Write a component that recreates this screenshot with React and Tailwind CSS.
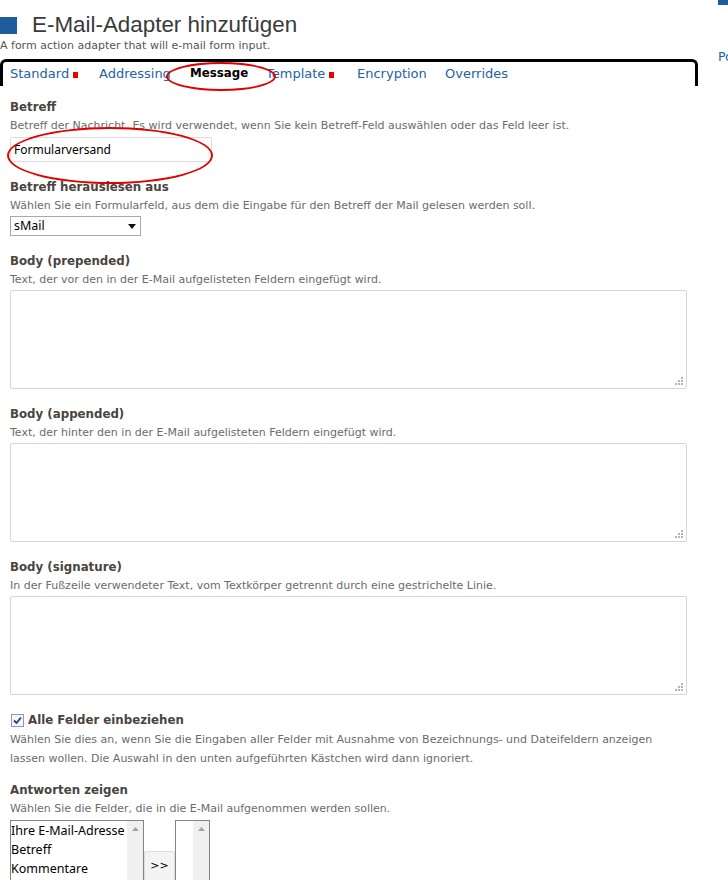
import React from "react";

function Grip() {
  return (
    <svg className="absolute right-[3px] bottom-[3px]" width="8" height="8" viewBox="0 0 8 8">
      {[
        [6, 0], [6, 3], [3, 3], [6, 6], [3, 6], [0, 6],
      ].map(([x, y], i) => (
        <rect key={i} x={x} y={y} width="2" height="2" fill="#b5b5b5" />
      ))}
    </svg>
  );
}

function Area() {
  return (
    <div className="relative w-[677px] h-[99px] border border-[#d6d6d6] rounded-[2px] bg-white mt-[3px]">
      <Grip />
    </div>
  );
}

function Label({ children, className = "" }) {
  return (
    <div className={"h-[15px] text-[11.8px] leading-[15px] font-bold text-[#4a4440] whitespace-nowrap " + className}>
      {children}
    </div>
  );
}

function Desc({ children, className = "" }) {
  return (
    <div className={"text-[11px] leading-[14px] text-[#6b6b6b] " + className}>{children}</div>
  );
}

function UpArrow() {
  return (
    <svg width="7" height="4" viewBox="0 0 7 4">
      <path d="M0 4 L3.5 0 L7 4 Z" fill="#a3a3a3" />
    </svg>
  );
}

function Marker() {
  return <span className="w-[5px] h-[6px] bg-[#ee0000] ml-[4px] mt-[2px]" />;
}

export default function App() {
  return (
    <div className="w-[728px] h-[880px] overflow-hidden bg-white relative font-['DejaVu_Sans',sans-serif]">
      <div className="flex">
        <div className="w-[698px] shrink-0">
          {/* Header */}
          <div className="flex items-center mt-[12px] h-[26px]">
            <div className="w-[17px] h-[17px] bg-[#1f5c9c]" />
            <div className="ml-[15px] text-[22.4px] leading-[26px] text-[#3a3a3a] font-['Liberation_Sans',sans-serif]">
              E-Mail-Adapter hinzufügen
            </div>
          </div>
          <div className="text-[11px] leading-[13px] text-[#555] mt-[1px] whitespace-nowrap">
            A form action adapter that will e-mail form input.
          </div>

          {/* Tabs */}
          <div className="relative mt-[7px] h-[27px] w-[698px] border-[3px] border-b-0 border-black rounded-t-[6px]">
            <div className="flex items-center h-[24px] pl-[7px] text-[13px] text-[#2462a8] whitespace-nowrap">
              <div className="w-[89px] flex items-center">
                <span>Standard</span>
                <Marker />
              </div>
              <div className="w-[91px]">Addressing</div>
              <div className="w-[76px] font-bold text-black text-[11.8px]">Message</div>
              <div className="w-[91px] flex items-center">
                <span>Template</span>
                <Marker />
              </div>
              <div className="w-[88px]">Encryption</div>
              <div>Overrides</div>
            </div>
          </div>

          {/* Content */}
          <div className="pl-[10px] pt-[14px]">
            <Label>Betreff</Label>
            <Desc className="mt-[4px]">Betreff der Nachricht. Es wird verwendet, wenn Sie kein Betreff-Feld auswählen oder das Feld leer ist.</Desc>
            <div className="mt-[4px] w-[202px] h-[25px] border border-[#dcdcdc] rounded-[2px] flex items-center pl-[3px] text-[12px] text-black font-['Noto_Sans',sans-serif]">
              Formularversand
            </div>

            <Label className="mt-[18px]">Betreff herauslesen aus</Label>
            <Desc className="mt-[4px]">Wählen Sie ein Formularfeld, aus dem die Eingabe für den Betreff der Mail gelesen werden soll.</Desc>
            <div className="mt-[3px] w-[131px] h-[20px] border border-[#a9a9a9] flex items-center justify-between pl-[3px] pr-[4px] text-[12.5px] text-black font-['Noto_Sans',sans-serif]">
              <span>sMail</span>
              <svg width="8" height="5" viewBox="0 0 8 5"><path d="M0 0 L8 0 L4 5 Z" fill="#111" /></svg>
            </div>

            <Label className="mt-[18px]">Body (prepended)</Label>
            <Desc className="mt-[4px]">Text, der vor den in der E-Mail aufgelisteten Feldern eingefügt wird.</Desc>
            <Area />

            <Label className="mt-[18px]">Body (appended)</Label>
            <Desc className="mt-[4px]">Text, der hinter den in der E-Mail aufgelisteten Feldern eingefügt wird.</Desc>
            <Area />

            <Label className="mt-[18px]">Body (signature)</Label>
            <Desc className="mt-[4px]">In der Fußzeile verwendeter Text, vom Textkörper getrennt durch eine gestrichelte Linie.</Desc>
            <Area />

            <div className="mt-[18px] h-[15px] flex items-center">
              <svg width="13" height="13" viewBox="0 0 13 13" className="ml-[1px]">
                <rect x="0.5" y="0.5" width="12" height="12" fill="#f4f6fb" stroke="#8a9ab8" />
                <path d="M3 6.5 L5.5 9 L10 3.5" fill="none" stroke="#253f80" strokeWidth="1.8" />
              </svg>
              <Label className="ml-[4px]">Alle Felder einbeziehen</Label>
            </div>
            <Desc className="leading-[19px] mt-[2px] w-[668px]">
              Wählen Sie dies an, wenn Sie die Eingaben aller Felder mit Ausnahme von Bezeichnungs- und Dateifeldern anzeigen lassen wollen. Die Auswahl in den unten aufgeführten Kästchen wird dann ignoriert.
            </Desc>

            <Label className="mt-[15px]">Antworten zeigen</Label>
            <Desc className="mt-[4px]">Wählen Sie die Felder, die in die E-Mail aufgenommen werden sollen.</Desc>
            <div className="mt-[4px] flex items-start">
              <div className="w-[134px] h-[70px] border border-[#848484] flex">
                <div className="flex-1 text-[12.5px] leading-[19px] text-black font-['Noto_Sans',sans-serif] whitespace-nowrap overflow-hidden">
                  <div>Ihre E-Mail-Adresse</div>
                  <div>Betreff</div>
                  <div>Kommentare</div>
                </div>
                <div className="w-[16px] bg-[#f0f0f0] flex justify-center pt-[6px]">
                  <UpArrow />
                </div>
              </div>
              <div className="mt-[31px] w-[31px] h-[30px] border border-[#dcdcdc] bg-[#f4f4f4] rounded-[2px] text-[11px] text-black flex items-center justify-center">
                &gt;&gt;
              </div>
              <div className="w-[35px] h-[70px] border border-[#848484] flex">
                <div className="flex-1" />
                <div className="w-[16px] bg-[#f0f0f0] flex justify-center pt-[6px]">
                  <UpArrow />
                </div>
              </div>
            </div>
          </div>
        </div>

        {/* Right column (cut off) */}
        <div className="ml-[20px] shrink-0 w-[10px] overflow-hidden">
          <div className="w-[12px] h-[5px] bg-[#1f5c9c]" />
          <div className="mt-[43px] text-[12.5px] text-[#2462a8] whitespace-nowrap">Po</div>
        </div>
      </div>

      {/* Red annotation ellipses */}
      <div className="absolute left-[166px] top-[62px] w-[110px] h-[29px] rounded-[50%] border-2 border-[#e00000]" />
      <div className="absolute left-[7px] top-[127px] w-[206px] h-[57px] rounded-[50%] border-2 border-[#e00000]" />
    </div>
  );
}
